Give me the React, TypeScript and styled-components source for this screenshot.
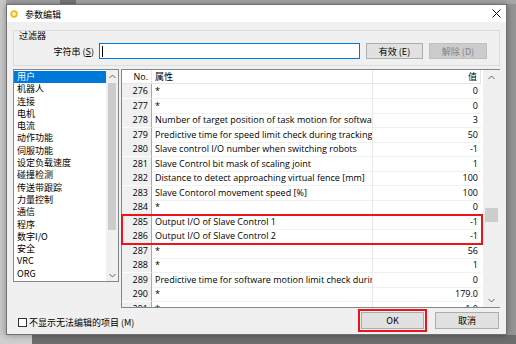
import React from "react";
import styled, { createGlobalStyle } from "styled-components";

const CJK = '"Noto Sans CJK SC", "Liberation Sans", sans-serif';
const LATIN = '"Open Sans", "Noto Sans CJK SC", sans-serif';

const GlobalStyle = createGlobalStyle`
  html, body { margin: 0; padding: 0; }
  body {
    width: 516px;
    height: 344px;
    overflow: hidden;
    font-family: ${LATIN};
    color: #000;
  }
`;

const Screen = styled.div`
  width: 516px;
  height: 344px;
  box-sizing: border-box;
  padding: 4px 0 0 6px;
  overflow: hidden;
  background:
    linear-gradient(to right, #cfcfcf 0 32px, #6d6d6d 32px 100%) bottom / 100% 9px no-repeat,
    linear-gradient(to right, #c8c8c8 0 6px, #a3a3a3 6px 60px, #7a7a7a 60px 76px, #a8a8a8 76px 100%) top / 100% 4px no-repeat,
    linear-gradient(to right, #c9c9c9 0 6px, #949494 6px 100%);
`;

const Window = styled.div`
  width: 501px;
  height: 331px;
  box-sizing: border-box;
  border: 1px solid #707070;
  background: #f0f0f0;
  display: flex;
  flex-direction: column;
  box-shadow: 0 0 7px rgba(0, 0, 0, 0.35);
`;

const TitleBar = styled.div`
  height: 17px;
  flex: none;
  background: #fff;
  display: flex;
  align-items: center;
  gap: 7px;
  padding: 0 5px 0 3px;
  font: 9px/11px ${CJK};
`;

const TitleText = styled.span`
  flex: 1;
  margin-top: 1px;
`;

const Body = styled.div`
  flex: 1;
  display: flex;
  flex-direction: column;
  padding: 8px 6px 0 6px;
  min-height: 0;
`;

const GroupBox = styled.div`
  height: 36px;
  flex: none;
  box-sizing: border-box;
  border: 1px solid #dcdcdc;
  display: flex;
  flex-direction: column;
  padding: 0 12px 0 0;
`;

const GroupTitle = styled.div`
  font: 9px/10px ${CJK};
  height: 12px;
  margin-left: 5px;
`;

const FilterRow = styled.div`
  display: flex;
  align-items: center;
  height: 16px;
`;

const FieldLabel = styled.label`
  width: 80px;
  margin-right: 5px;
  text-align: right;
  font: 9px/11px ${CJK};
  & u { text-decoration: underline; }
`;

const TextBox = styled.div`
  width: 261px;
  height: 16px;
  box-sizing: border-box;
  border: 1px solid #0078d7;
  background: #fff;
  display: flex;
  align-items: center;
  padding-left: 2px;
`;

const Caret = styled.span`
  width: 1px;
  height: 11px;
  background: #000;
`;

const Button = styled.button<{ $w: number; $h?: number; $disabled?: boolean }>`
  width: ${(p) => p.$w}px;
  height: ${(p) => p.$h ?? 16}px;
  box-sizing: border-box;
  margin: 0;
  padding: 0;
  border: 1px solid ${(p) => (p.$disabled ? "#bfbfbf" : "#adadad")};
  background: ${(p) => (p.$disabled ? "#cccccc" : "#e1e1e1")};
  color: ${(p) => (p.$disabled ? "#838383" : "#000")};
  font: 9px/11px ${CJK};
  display: flex;
  align-items: center;
  justify-content: center;
`;

const FilterButtons = styled.div`
  display: flex;
  gap: 6px;
  margin-left: 6px;
`;

const Main = styled.div`
  display: flex;
  gap: 2px;
  height: 239px;
  flex: none;
  margin-top: 3px;
  align-items: flex-start;
`;

const ListBox = styled.div`
  width: 106px;
  height: 213px;
  box-sizing: border-box;
  border: 1px solid #828790;
  background: #fff;
  display: flex;
`;

const ListItems = styled.div`
  flex: 1;
  overflow: hidden;
  padding-top: 1px;
`;

const ListItem = styled.div<{ $selected?: boolean }>`
  height: 12.3px;
  line-height: 12px;
  padding-left: 3px;
  font-size: 9px;
  font-family: ${CJK};
  white-space: nowrap;
  background: ${(p) => (p.$selected ? "#0078d7" : "transparent")};
  color: ${(p) => (p.$selected ? "#fff" : "#000")};
`;

const VScroll = styled.div<{ $w: number }>`
  width: ${(p) => p.$w}px;
  flex: none;
  background: #f0f0f0;
  display: flex;
  flex-direction: column;
`;

const ArrowCell = styled.div<{ $h: number }>`
  height: ${(p) => p.$h}px;
  flex: none;
  display: flex;
  align-items: center;
  justify-content: center;
`;

const Track = styled.div<{ $top: number; $size: number; $inset: number }>`
  flex: 1;
  display: flex;
  flex-direction: column;
  padding: ${(p) => p.$top}px ${(p) => p.$inset}px 0;
  &::before {
    content: "";
    display: block;
    height: ${(p) => p.$size}px;
    background: #cdcdcd;
  }
`;

const Table = styled.div`
  width: 379px;
  height: 239px;
  box-sizing: border-box;
  border: 1px solid #828790;
  background: #fff;
  display: flex;
`;

const TableGrid = styled.div`
  width: 360px;
  flex: none;
  display: flex;
  flex-direction: column;
  overflow-x: visible;
  overflow-y: clip;
`;

const ColsTemplate = "30px 221px 108px";

const HeaderRow = styled.div`
  display: grid;
  grid-template-columns: ${ColsTemplate};
  height: 14px;
  flex: none;
`;

const HeaderCell = styled.div<{ $align: "left" | "right"; $latin?: boolean }>`
  box-sizing: border-box;
  border-right: 1px solid #e5e5e5;
  border-bottom: 1px solid #e5e5e5;
  text-align: ${(p) => p.$align};
  padding: 0 3px 0 3px;
  font: ${(p) => (p.$latin ? `9px/13px ${LATIN}` : `9px/13px ${CJK}`)};
  white-space: nowrap;
`;

const Row = styled.div`
  display: grid;
  grid-template-columns: ${ColsTemplate};
  height: 14.5px;
  flex: none;
`;

const NoCell = styled.div`
  box-sizing: border-box;
  background: #f0f0f0;
  border-right: 1px solid #a9a9a9;
  border-bottom: 1px solid #fdfdfd;
  text-align: right;
  padding-right: 3px;
  font: 9px/14px ${LATIN};
`;

const PropCell = styled.div`
  box-sizing: border-box;
  border-right: 1px solid #e8e8e8;
  border-bottom: 1px solid #f0f0f0;
  padding-left: 3px;
  overflow: hidden;
  white-space: nowrap;
  font: 9px/14px ${LATIN};
`;

const ValueCell = styled.div`
  box-sizing: border-box;
  border-bottom: 1px solid #f0f0f0;
  text-align: right;
  padding-right: 3px;
  font: 9px/14px ${LATIN};
`;

const Highlight = styled.div`
  display: flex;
  flex-direction: column;
  flex: none;
  outline: 2px solid #e8161c;
  outline-offset: -1px;
  position: relative;
  z-index: 1;
`;

const ScrollGap = styled.div`
  width: 1px;
  flex: none;
`;

const Footer = styled.div`
  display: flex;
  align-items: center;
  height: 23px;
  margin-top: 1px;
  flex: none;
`;

const CheckLabel = styled.label`
  display: flex;
  align-items: center;
  gap: 2px;
  margin-left: 5px;
  margin-top: 3px;
  font: 9px/11px ${CJK};
`;

const CheckBox = styled.span`
  width: 9px;
  height: 9px;
  box-sizing: border-box;
  border: 1px solid #333;
  background: #fff;
`;

const FooterButtons = styled.div`
  margin-left: auto;
  margin-right: 1px;
  display: flex;
  align-items: center;
  gap: 8px;
`;

const FocusFrame = styled.div`
  border: 2px solid #e8161c;
  padding: 1px;
  display: flex;
`;

const Chevron = ({ up }: { up?: boolean }) => (
  <svg width="7" height="5" viewBox="0 0 7 5">
    <polyline
      points={up ? "0.5,4 3.5,1 6.5,4" : "0.5,1 3.5,4 6.5,1"}
      fill="none"
      stroke="#606060"
      strokeWidth="1"
    />
  </svg>
);

const AppIcon = () => (
  <svg width="8" height="8" viewBox="0 0 8 8">
    <circle cx="4" cy="4" r="2.8" fill="#fff6c8" stroke="#f2b705" strokeWidth="1.8" />
    <path d="M1 6.5 L0.3 7.8 L2 7.2 Z" fill="#f2b705" />
  </svg>
);

const CloseIcon = () => (
  <svg width="9" height="9" viewBox="0 0 9 9">
    <path d="M0.5 0.5 L8.5 8.5 M8.5 0.5 L0.5 8.5" stroke="#111" strokeWidth="1" />
  </svg>
);

const categories = [
  "用户",
  "机器人",
  "连接",
  "电机",
  "电流",
  "动作功能",
  "伺服功能",
  "设定负载速度",
  "碰撞检测",
  "传送带跟踪",
  "力量控制",
  "通信",
  "程序",
  "数字I/O",
  "安全",
  "VRC",
  "ORG",
];

type Param = { no: number; name: string; value: string };

const params: Param[] = [
  { no: 276, name: "*", value: "0" },
  { no: 277, name: "*", value: "0" },
  { no: 278, name: "Number of target position of task motion for software limit check", value: "3" },
  { no: 279, name: "Predictive time for speed limit check during tracking", value: "50" },
  { no: 280, name: "Slave control I/O number when switching robots", value: "-1" },
  { no: 281, name: "Slave Control bit mask of scaling joint", value: "1" },
  { no: 282, name: "Distance to detect approaching virtual fence [mm]", value: "100" },
  { no: 283, name: "Slave Contorol movement speed [%]", value: "100" },
  { no: 284, name: "*", value: "0" },
  { no: 285, name: "Output I/O of Slave Control 1", value: "-1" },
  { no: 286, name: "Output I/O of Slave Control 2", value: "-1" },
  { no: 287, name: "*", value: "56" },
  { no: 288, name: "*", value: "1" },
  { no: 289, name: "Predictive time for software motion limit check during tracking", value: "0" },
  { no: 290, name: "*", value: "179.0" },
  { no: 291, name: "*", value: "1.0" },
];

const ParamRow = ({ p }: { p: Param }) => (
  <Row>
    <NoCell>{p.no}</NoCell>
    <PropCell>{p.name}</PropCell>
    <ValueCell>{p.value}</ValueCell>
  </Row>
);

export default function App() {
  const before = params.filter((p) => p.no < 285);
  const marked = params.filter((p) => p.no === 285 || p.no === 286);
  const after = params.filter((p) => p.no > 286);
  return (
    <>
      <GlobalStyle />
      <Screen>
        <Window>
          <TitleBar>
            <AppIcon />
            <TitleText>参数编辑</TitleText>
            <CloseIcon />
          </TitleBar>
          <Body>
            <GroupBox>
              <GroupTitle>过滤器</GroupTitle>
              <FilterRow>
                <FieldLabel>
                  字符串 (<u>S</u>)
                </FieldLabel>
                <TextBox>
                  <Caret />
                </TextBox>
                <FilterButtons>
                  <Button $w={57}>有效 (E)</Button>
                  <Button $w={58} $disabled>
                    解除 (D)
                  </Button>
                </FilterButtons>
              </FilterRow>
            </GroupBox>
            <Main>
              <ListBox>
                <ListItems>
                  {categories.map((c, i) => (
                    <ListItem key={c} $selected={i === 0}>
                      {c}
                    </ListItem>
                  ))}
                </ListItems>
                <VScroll $w={12}>
                  <ArrowCell $h={12}>
                    <Chevron up />
                  </ArrowCell>
                  <Track $top={1} $size={147} $inset={2} />
                  <ArrowCell $h={12}>
                    <Chevron />
                  </ArrowCell>
                </VScroll>
              </ListBox>
              <Table>
                <TableGrid>
                  <HeaderRow>
                    <HeaderCell $align="right" $latin>
                      No.
                    </HeaderCell>
                    <HeaderCell $align="left">属性</HeaderCell>
                    <HeaderCell $align="right">值</HeaderCell>
                  </HeaderRow>
                  {before.map((p) => (
                    <ParamRow key={p.no} p={p} />
                  ))}
                  <Highlight>
                    {marked.map((p) => (
                      <ParamRow key={p.no} p={p} />
                    ))}
                  </Highlight>
                  {after.map((p) => (
                    <ParamRow key={p.no} p={p} />
                  ))}
                </TableGrid>
                <ScrollGap />
                <VScroll $w={17}>
                  <ArrowCell $h={14}>
                    <Chevron up />
                  </ArrowCell>
                  <Track $top={124} $size={14} $inset={2} />
                  <ArrowCell $h={14}>
                    <Chevron />
                  </ArrowCell>
                </VScroll>
              </Table>
            </Main>
            <Footer>
              <CheckLabel>
                <CheckBox />
                不显示无法编辑的项目 (M)
              </CheckLabel>
              <FooterButtons>
                <FocusFrame>
                  <Button $w={63} $h={17}>
                    OK
                  </Button>
                </FocusFrame>
                <Button $w={64} $h={17}>
                  取消
                </Button>
              </FooterButtons>
            </Footer>
          </Body>
        </Window>
      </Screen>
    </>
  );
}
